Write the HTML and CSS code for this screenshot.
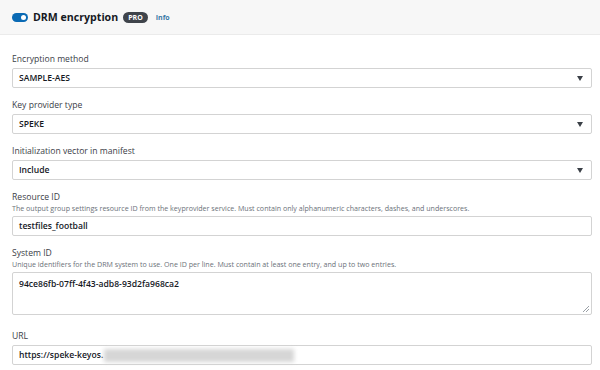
FILE: index.html
```html
<!DOCTYPE html>
<html lang="en">
<head>
  <meta charset="UTF-8" />
  <title>DRM encryption</title>
  <link rel="stylesheet" href="styles.css">
</head>
<body>
  <header class="panel-header">
    <span class="toggle"><span class="knob"></span></span>
    <h2>DRM encryption</h2>
    <span class="badge">PRO</span>
    <a href="#" class="info">Info</a>
  </header>

  <main class="form">
    <div class="field">
      <label>Encryption method</label>
      <div class="control select">
        <span>SAMPLE-AES</span>
        <svg class="caret" width="6" height="5" viewBox="0 0 6 5"><path d="M0 0h6L3 5z" fill="#3b4047"/></svg>
      </div>
    </div>

    <div class="field">
      <label>Key provider type</label>
      <div class="control select">
        <span>SPEKE</span>
        <svg class="caret" width="6" height="5" viewBox="0 0 6 5"><path d="M0 0h6L3 5z" fill="#3b4047"/></svg>
      </div>
    </div>

    <div class="field">
      <label>Initialization vector in manifest</label>
      <div class="control select">
        <span>Include</span>
        <svg class="caret" width="6" height="5" viewBox="0 0 6 5"><path d="M0 0h6L3 5z" fill="#3b4047"/></svg>
      </div>
    </div>

    <div class="field">
      <label>Resource ID</label>
      <p class="hint">The output group settings resource ID from the keyprovider service. Must contain only alphanumeric characters, dashes, and underscores.</p>
      <div class="control"><span>testfiles_football</span></div>
    </div>

    <div class="field field-tall">
      <label>System ID</label>
      <p class="hint">Unique identifiers for the DRM system to use. One ID per line. Must contain at least one entry, and up to two entries.</p>
      <div class="control textarea">
        <span>94ce86fb-07ff-4f43-adb8-93d2fa968ca2</span>
        <svg class="grip" width="6" height="6" viewBox="0 0 6 6"><path d="M6 0L0 6M6 3L3 6" stroke="#9aa0a6" stroke-width="1"/></svg>
      </div>
    </div>

    <div class="field">
      <label>URL</label>
      <div class="control"><span>https://speke-keyos.</span><span class="redacted"></span></div>
    </div>
  </main>
</body>
</html>
```

FILE: styles.css
```css
* {
  margin: 0;
  padding: 0;
  box-sizing: border-box;
}

body {
  font-family: 'Open Sans', 'Noto Sans', sans-serif;
  background: #fff;
  color: #16191f;
  width: 600px;
  height: 370px;
  overflow: hidden;
}

.panel-header {
  height: 35px;
  display: flex;
  align-items: center;
  padding-left: 12px;
  background: #f7f7f7;
  border-bottom: 1px solid #ebebeb;
}

.toggle {
  width: 16px;
  height: 9px;
  border-radius: 5px;
  background: #0a6ab4;
  position: relative;
  margin-right: 5px;
}

.toggle .knob {
  position: absolute;
  right: 2px;
  top: 2px;
  width: 5px;
  height: 5px;
  border-radius: 50%;
  background: #fff;
}

.panel-header h2 {
  font-size: 10.6px;
  font-weight: 700;
  color: #16191f;
}

.badge {
  margin-left: 5px;
  background: #3f444b;
  color: #fff;
  font-size: 7px;
  font-weight: 700;
  border-radius: 6px;
  padding: 1px 5px;
  line-height: 9px;
}

.info {
  margin-left: 8px;
  font-size: 7px;
  font-weight: 700;
  color: #3a7aa6;
  text-decoration: none;
}

.form {
  padding: 18px 8px 0 12px;
}

.field {
  margin-bottom: 11px;
}

.field-tall {
  margin-bottom: 15px;
}

.field label {
  display: block;
  font-size: 8.6px;
  line-height: 12px;
  color: #3b4047;
  margin-bottom: 3px;
}

.hint {
  font-size: 7.1px;
  line-height: 10px;
  color: #6b7179;
  margin-top: -3px;
  margin-bottom: 3px;
}

.control {
  height: 20px;
  border: 1px solid #d3d3d3;
  border-radius: 2px;
  display: flex;
  align-items: center;
  padding: 0 8px 0 6px;
  font-size: 8.6px;
  font-weight: 600;
  color: #16191f;
}

.select {
  justify-content: space-between;
}

.textarea {
  height: 43px;
  align-items: flex-start;
  padding-top: 5px;
  position: relative;
}

.grip {
  position: absolute;
  right: 2px;
  bottom: 2px;
}

.redacted {
  display: inline-block;
  width: 190px;
  height: 13px;
  margin-left: 1px;
  background: #d6d6d6;
  filter: blur(2px);
}
```
